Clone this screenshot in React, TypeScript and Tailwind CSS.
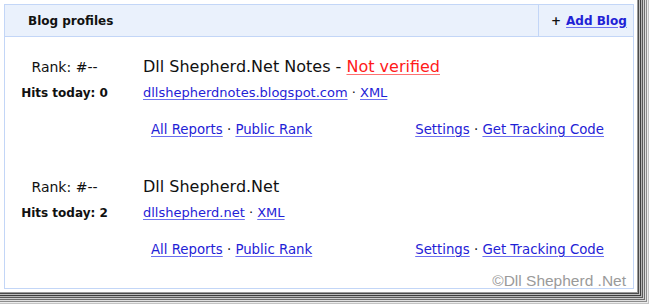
// Blog profiles panel — two tracked blogs, each with rank, hits and links.

const stripes = [
  "border-r border-b border-[#9a9a9a]",
  "border-r border-b border-[#4a4a4a]",
  "border-r border-b border-[#bdbdbd]",
  "border-r border-b border-[#3e3e3e]",
  "border-r border-b border-[#b5b5b5]",
  "border-r border-b border-[#5a5a5a]",
  "border-r border-b border-[#cfcfcf]",
  "border-r border-b border-[#6e6e6e]",
  "border-r border-b border-[#dedede]",
  "border-r border-b border-[#8c8c8c]",
  "border-r border-b border-[#ececec]",
  "border-r border-b border-[#c4c4c4]",
];

function Shadow({ depth, children }: { depth: number; children: React.ReactNode }) {
  if (depth >= stripes.length) return <>{children}</>;
  return (
    <div className={stripes[stripes.length - 1 - depth]}>
      <Shadow depth={depth + 1}>{children}</Shadow>
    </div>
  );
}

const link = "text-[#1f22d6] underline decoration-[#6c70f0] underline-offset-2";

type Blog = { title: string; url: string; hits: number; verified: boolean };

const blogs: Blog[] = [
  { title: "Dll Shepherd.Net Notes", url: "dllshepherdnotes.blogspot.com", hits: 0, verified: false },
  { title: "Dll Shepherd.Net", url: "dllshepherd.net", hits: 2, verified: true },
];

function BlogRow({ blog }: { blog: Blog }) {
  return (
    <div className="h-[120px] pt-[18px]">
      <div className="flex h-[24px] items-center">
        <div className="w-[119px] text-center text-[14px] text-[#111]">Rank: #--</div>
        <div className="ml-[19px] text-[16px] text-[#111]">
          {blog.title}
          {!blog.verified && (
            <>
              {" "}-{" "}
              <span className="text-[#ff1a1a] underline decoration-[#ff7070] underline-offset-2">Not verified</span>
            </>
          )}
        </div>
      </div>
      <div className="mt-[4px] flex h-[20px] items-center">
        <div className="w-[119px] text-center text-[12px] font-bold text-[#111]">Hits today: {blog.hits}</div>
        <div className="ml-[19px] text-[13px] text-[#111]">
          <span className={link}>{blog.url}</span> · <span className={link}>XML</span>
        </div>
      </div>
      <div className="mt-[17px] flex h-[20px] items-center text-[13.3px] text-[#111]">
        <div className="ml-[146px]">
          <span className={link}>All Reports</span> · <span className={link}>Public Rank</span>
        </div>
        <div className="ml-auto mr-[29px]">
          <span className={link}>Settings</span> · <span className={link}>Get Tracking Code</span>
        </div>
      </div>
    </div>
  );
}

export default function App() {
  return (
    <div className="h-[304px] w-[649px] bg-white font-['DejaVu_Sans',sans-serif]">
      <Shadow depth={0}>
        <div className="h-[292px] w-[637px] pl-[4px] pt-[4px]">
          <div className="relative h-[285px] w-[630px] border border-[#c3d6f7] bg-white">
            <div className="flex h-[32px] border-b border-[#c3d6f7] bg-[#eaf1fc]">
              <div className="flex flex-1 items-center pl-[23px] text-[12px] font-bold text-[#111]">Blog profiles</div>
              <div className="flex w-[95px] items-center border-l border-[#c3d6f7] pl-[12px] text-[12px] font-bold text-[#111]">
                +<span className={`ml-[5px] ${link}`}>Add Blog</span>
              </div>
            </div>
            {blogs.map((b) => (
              <BlogRow key={b.url} blog={b} />
            ))}
            <div className="absolute bottom-[-4px] right-[7px] font-['Liberation_Sans',sans-serif] text-[15.5px] text-[#9a9a9a]">
              ©Dll Shepherd .Net
            </div>
          </div>
        </div>
      </Shadow>
    </div>
  );
}
